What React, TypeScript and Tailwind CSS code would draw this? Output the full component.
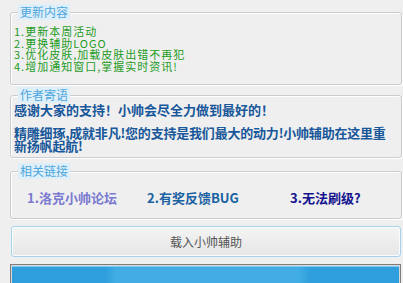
import React from "react";

const box =
  "ml-[10px] w-[392px] border border-[#c9cdd0] rounded-[3px] shadow-[inset_1px_1px_0_#ffffff,1px_1px_0_#ffffff] px-0";
const legend =
  "ml-[7px] px-[2px] bg-[#ddeff9] text-[#4ea6dc] text-[12px] leading-[16px]";

let App = () => {
  return (
    <div className="w-[403px] h-[283px] overflow-hidden bg-[#efefef] font-['Noto_Sans_CJK_SC',sans-serif]">
      <div className="h-[4px]"></div>
      <fieldset className={box + " pb-[12px]"}>
        <legend className={legend}>更新内容</legend>
        <div className="pl-[3px] pt-[6px] text-[#1e9c1e] text-[11px] tracking-[1px] leading-[11.5px] whitespace-nowrap">
          <p>1.更新本周活动</p>
          <p>2.更换辅助LOGO</p>
          <p>3.优化皮肤,加载皮肤出错不再犯</p>
          <p>4.增加通知窗口,掌握实时资讯!</p>
        </div>
      </fieldset>

      <fieldset className={box + " mt-[2px] pb-[5px]"}>
        <legend className={legend}>作者寄语</legend>
        <div className="pl-[3px] text-[#17579a] text-[13px] font-bold whitespace-nowrap">
          <p className="leading-[14px]">感谢大家的支持！小帅会尽全力做到最好的！</p>
          <p className="mt-[9px] leading-[13px] tracking-[-0.2px]">
            精雕细琢,成就非凡!您的支持是我们最大的动力!小帅辅助在这里重
            <br />
            新扬帆起航!
          </p>
        </div>
      </fieldset>

      <fieldset className={box + " mt-[5px] pb-[12px]"}>
        <legend className={legend}>相关链接</legend>
        <div className="flex pl-[16px] pt-[11px] text-[13px] leading-[16px] font-bold whitespace-nowrap">
          <span className="w-[120px] text-[#7b7bd0]">1.洛克小帅论坛</span>
          <span className="w-[143px] text-[#1a62a2]">2.有奖反馈BUG</span>
          <span className="text-[#14148e]">3.无法刷级?</span>
        </div>
      </fieldset>

      <button className="mt-[7px] ml-[11px] w-[390px] h-[31px] flex items-center justify-center rounded-[3px] border border-[#a6d3ec] bg-[linear-gradient(#f4f4f4,#e6e6e6)] text-[12px] text-[#555555] shadow-[inset_0_0_0_1px_#f8fcfe]">
        载入小帅辅助
      </button>

      <div className="mt-[7px] ml-[10px] w-[391px] h-[24px] border border-[#7d7d7d] p-[1px] bg-[#d8d8d8]">
        <div className="h-full bg-[linear-gradient(to_right,#2e9fdc_0%,#2e9fdc_24%,#42ade4_27%,#42ade4_74%,#2e9fdc_77%,#2e9fdc_100%)] shadow-[inset_0_1px_0_#7ccbf2]"></div>
      </div>
    </div>
  );
};

export default App;
